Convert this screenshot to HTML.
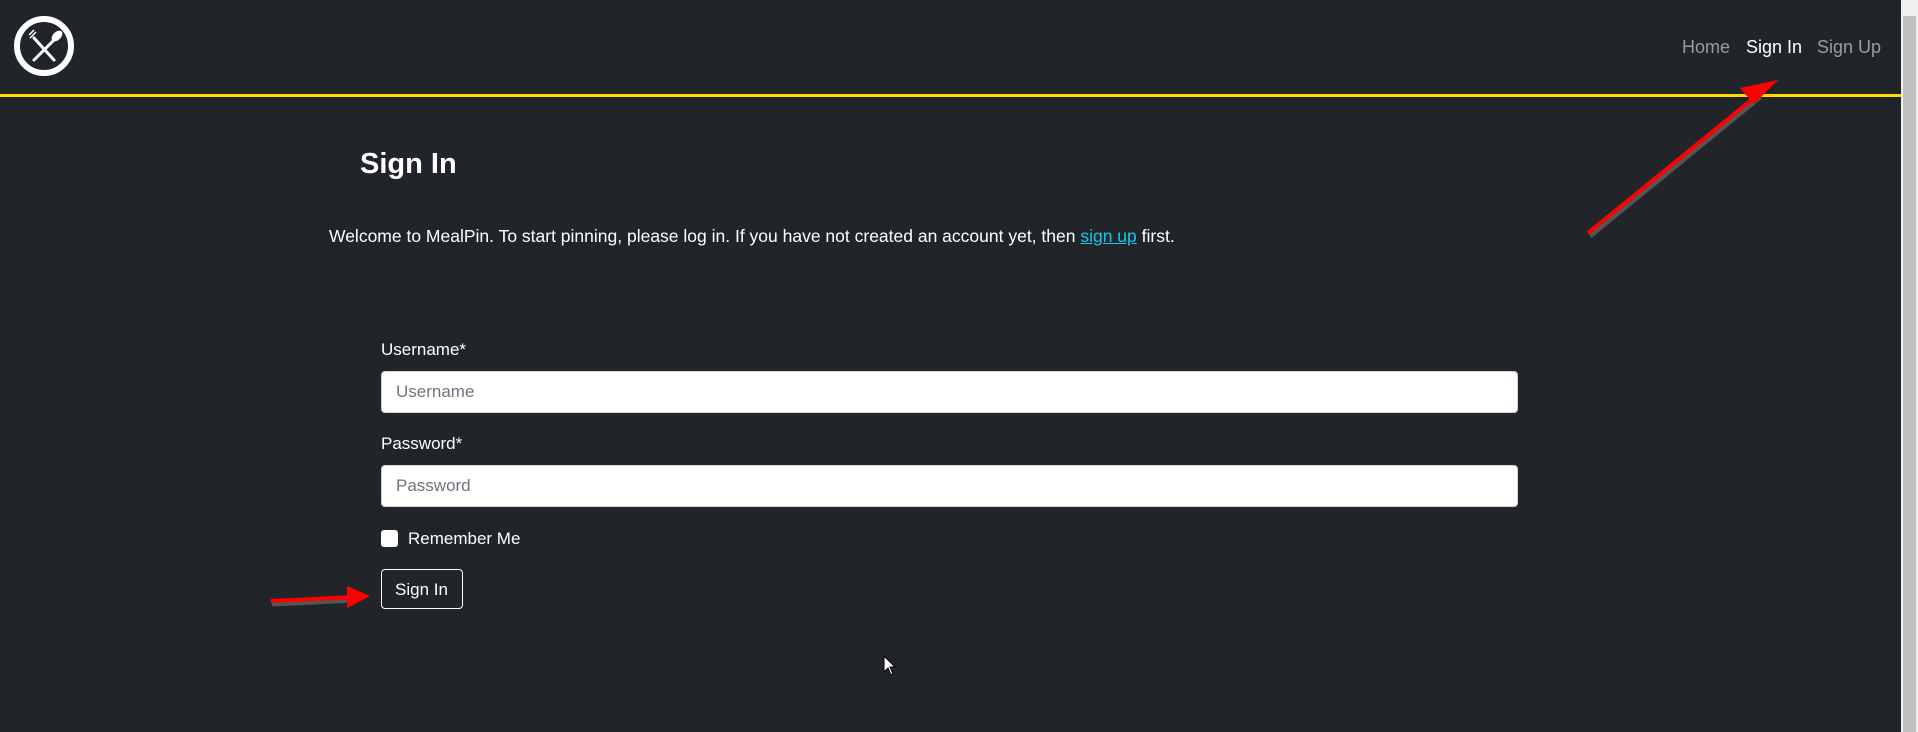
<!DOCTYPE html>
<html><head><meta charset="utf-8"><style>
*{box-sizing:border-box;margin:0;padding:0}
body{width:1918px;height:732px;background:#212529;font-family:"Liberation Sans",sans-serif;color:#fff;position:relative;overflow:hidden}
.abs{position:absolute;white-space:nowrap}
.line{position:absolute;left:0;top:94px;width:1901px;height:3px;background:#ffd800}
.sb{position:absolute;left:1901px;top:0;width:17px;height:732px;background:#f0f0f0}
.sb div{position:absolute;left:2px;top:16px;width:13px;height:716px;background:#c1c1c1}
.nav{font-size:18px;top:37px}
.input{position:absolute;left:381px;width:1137px;height:42px;background:#fff;border:1px solid #ced4da;border-radius:4px;color:#6c757d;font-size:17px;padding:10px 14px}
.lbl{font-size:17px}
</style></head><body>
<svg class="abs" style="left:13px;top:15px" width="62" height="62" viewBox="0 0 62 62">
<circle cx="31" cy="31" r="27" fill="none" stroke="#fff" stroke-width="6"/>
<g stroke="#fff" stroke-width="3" stroke-linecap="round">
<line x1="21" y1="45" x2="43" y2="23"/><line x1="41" y1="45" x2="21" y2="23"/></g>
<ellipse cx="44" cy="21" rx="4" ry="6.5" transform="rotate(45 44 21)" fill="#fff"/>
<g stroke="#fff" stroke-width="1.5"><line x1="17" y1="23" x2="23" y2="17"/><line x1="16" y1="20" x2="21" y2="15"/></g>
</svg>
<div class="abs nav" style="left:1682px;color:#9a9da0">Home</div>
<div class="abs nav" style="left:1746px;color:#fff">Sign In</div>
<div class="abs nav" style="left:1817px;color:#9a9da0">Sign Up</div>
<div class="line"></div>
<div class="sb"><div></div></div>
<div class="abs" style="left:360px;top:148px;font-size:29px;font-weight:bold">Sign In</div>
<div class="abs" style="left:329px;top:226px;font-size:17.5px">Welcome to MealPin. To start pinning, please log in. If you have not created an account yet, then <span style="color:#0dcaf0;text-decoration:underline">sign up</span> first.</div>
<div class="abs lbl" style="left:381px;top:340px">Username*</div>
<div class="input" style="top:371px">Username</div>
<div class="abs lbl" style="left:381px;top:434px">Password*</div>
<div class="input" style="top:465px">Password</div>
<div class="abs" style="left:381px;top:530px;width:17px;height:17px;background:#fff;border-radius:3px"></div>
<div class="abs lbl" style="left:408px;top:529px">Remember Me</div>
<div class="abs" style="left:381px;top:569px;width:82px;height:40px;border:1px solid #fff;border-radius:4px;font-size:17px;padding:10px 0 0 13px">Sign In</div>
<svg class="abs" style="left:0;top:0" width="1918" height="732">
<line x1="1590" y1="236" x2="1760" y2="97" stroke="#555" stroke-width="5"/>
<line x1="1588" y1="233" x2="1760" y2="93" stroke="#f00" stroke-width="4"/>
<polygon points="1778,80 1754,104 1740,88" fill="#f00"/>
<line x1="272" y1="604" x2="355" y2="600" stroke="#555" stroke-width="5"/>
<line x1="271" y1="601" x2="355" y2="597" stroke="#f00" stroke-width="4"/>
<polygon points="370,596 347,586 347,608" fill="#f00"/>
<polygon points="884,656 884,672 888,668 891,675 893,674 890,667 895,667" fill="#fff" stroke="#000" stroke-width="1"/>
</svg>
</body></html>
